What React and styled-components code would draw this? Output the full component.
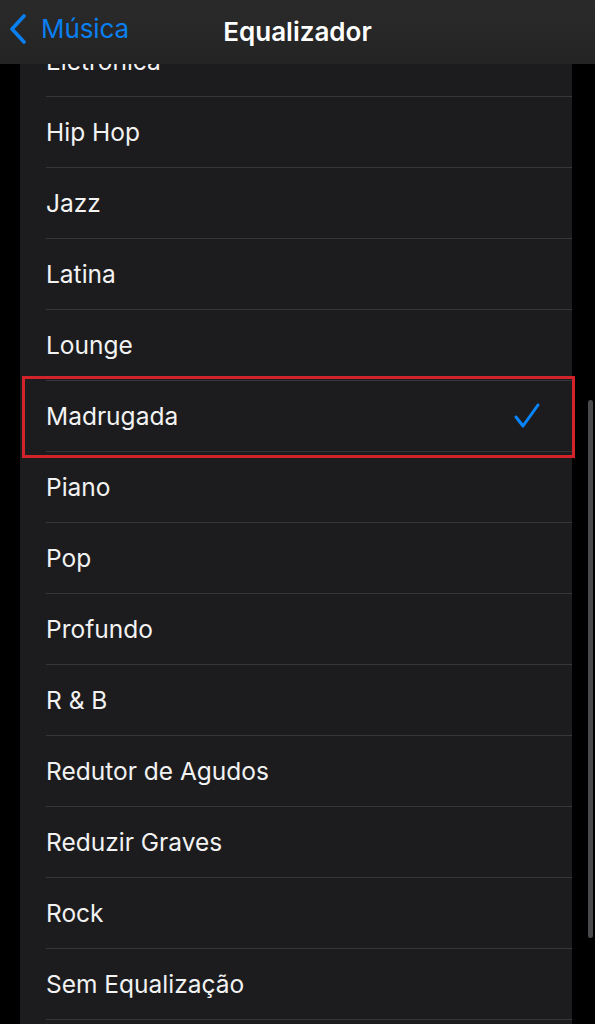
import React from 'react';
import styled, { createGlobalStyle } from 'styled-components';

const GlobalStyle = createGlobalStyle`
  html, body {
    margin: 0;
    padding: 0;
    background: #000;
  }
  body {
    font-family: Inter, "Noto Sans", "Liberation Sans", sans-serif;
    -webkit-font-smoothing: antialiased;
  }
`;

const presets = [
  'Eletrônica',
  'Hip Hop',
  'Jazz',
  'Latina',
  'Lounge',
  'Madrugada',
  'Piano',
  'Pop',
  'Profundo',
  'R & B',
  'Redutor de Agudos',
  'Reduzir Graves',
  'Rock',
  'Sem Equalização',
];

export default function App() {
  const selected = 'Madrugada';
  return (
    <>
      <GlobalStyle />
      <Screen>
        <NavBar>
          <BackButton>
            <svg width="18" height="30" viewBox="0 0 18 30">
              <polyline
                points="15,2 3,15 15,28"
                fill="none"
                stroke="#0a7ff0"
                strokeWidth="3.6"
                strokeLinecap="round"
                strokeLinejoin="round"
              />
            </svg>
            <BackLabel>Música</BackLabel>
          </BackButton>
          <Title>Equalizador</Title>
        </NavBar>

        <Content>
          <Card>
            {presets.map((name) => (
              <Row key={name} $highlight={name === selected}>
                <RowLabel>{name}</RowLabel>
                {name === selected && (
                  <svg width="28" height="28" viewBox="0 0 28 28">
                    <polyline
                      points="3,15 10,24 25,3"
                      fill="none"
                      stroke="#0a84ff"
                      strokeWidth="3"
                      strokeLinecap="round"
                      strokeLinejoin="round"
                    />
                  </svg>
                )}
              </Row>
            ))}
          </Card>
        </Content>

        <ScrollIndicator />
      </Screen>
    </>
  );
}

/* eslint-disable */
const Screen = styled.div`
  position: relative;
  width: 595px;
  height: 1024px;
  overflow: hidden;
  background: #000;
`;

const NavBar = styled.div`
  position: absolute;
  top: 0;
  left: 0;
  right: 0;
  height: 64px;
  z-index: 5;
  display: flex;
  align-items: center;
  justify-content: center;
  background: linear-gradient(#2a2a2a, #242424);
`;

const BackButton = styled.div`
  position: absolute;
  left: 9px;
  top: 13px;
  display: flex;
  align-items: center;
  gap: 14px;
`;

const BackLabel = styled.span`
  color: #0a7ff0;
  font-size: 26px;
  letter-spacing: -0.1px;
`;

const Title = styled.h1`
  margin: 0 0 2px 0;
  color: #fff;
  font-size: 26px;
  font-weight: 600;
  letter-spacing: 0;
`;

const Content = styled.div`
  padding: 26px 23px 0 20px;
`;

const Card = styled.div`
  background: #1c1c1e;
  padding-bottom: 80px;
`;

const Row = styled.div`
  position: relative;
  height: 70px;
  margin-left: 26px;
  padding-right: 31px;
  display: flex;
  align-items: center;
  justify-content: space-between;
  border-bottom: 1px solid #363638;

  ${(p) => p.$highlight && `
    &::after {
      content: '';
      position: absolute;
      top: -5px;
      bottom: -7px;
      left: -24px;
      right: -3px;
      border: 3px solid #d2232b;
      pointer-events: none;
    }
  `}
`;

const RowLabel = styled.span`
  color: #f2f2f2;
  font-size: 24.5px;
  letter-spacing: 0;
`;

const ScrollIndicator = styled.div`
  position: absolute;
  right: 2px;
  top: 400px;
  width: 5px;
  height: 538px;
  border-radius: 3px;
  background: #4a4a4c;
`;
/* eslint-enable */
